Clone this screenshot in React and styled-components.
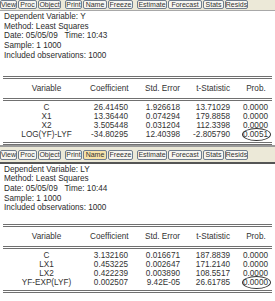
import React from 'react';
import styled, { createGlobalStyle } from 'styled-components';

const GlobalStyle = createGlobalStyle`
  html, body {
    margin: 0;
    padding: 0;
    background: #ffffff;
  }
  body {
    font-family: "Liberation Sans", Arial, sans-serif;
    color: #2a2a2a;
    width: 275px;
    overflow: hidden;
  }
`;

const Page = styled.div`
  width: 275px;
  display: flex;
  flex-direction: column;
`;

const Panel = styled.section`
  display: flex;
  flex-direction: column;
  border-top: ${(p) => (p.$first ? 'none' : '2px solid #9a9a9a')};
`;

const Toolbar = styled.div`
  display: flex;
  align-items: flex-start;
  box-sizing: border-box;
  height: ${(p) => (p.$first ? 11 : 17)}px;
  padding-top: ${(p) => (p.$first ? 0 : 3)}px;
  background: #ece9d8;
  border-bottom: ${(p) => (p.$first ? '1px solid #a8a8a8' : '2px solid #555')};
`;

const ButtonGroup = styled.div`
  display: flex;
  margin-right: ${(p) => p.$gap || 0}px;
`;

const ToolButton = styled.span`
  display: flex;
  align-items: center;
  justify-content: center;
  height: ${(p) => (p.$tall ? 10 : 9)}px;
  box-sizing: border-box;
  width: ${(p) => p.$w}px;
  margin-right: 1px;
  border: 1px solid #6f7d8e;
  border-radius: 2px;
  background: ${(p) => (p.$hot ? '#f7e2a8' : '#f7f6f1')};
  font-size: 7px;
  line-height: 7px;
  color: #333;
  white-space: nowrap;
`;

const Info = styled.div`
  padding: 1px 0 0 4px;
  font-size: 8.2px;
  line-height: 9.7px;
  color: #2c2c2c;
`;

const Table = styled.div`
  margin: ${(p) => p.$top}px 3px 0 3px;
  border-top: 3px double #707070;
  border-bottom: 3px double #707070;
  padding-bottom: 3px;
`;

const HeadRow = styled.div`
  display: grid;
  grid-template-columns: 87px 38px 52px 50px 38px 1fr;
  align-items: center;
  height: 19px;
  border-bottom: 3px double #707070;
  margin-bottom: 2px;
  font-size: 8.2px;
  color: #333;
`;

const Row = styled.div`
  display: grid;
  grid-template-columns: 87px 38px 52px 50px 38px 1fr;
  align-items: center;
  height: 9px;
  font-size: 8.2px;
  color: #333;
`;

const NameCell = styled.span`
  text-align: center;
  white-space: nowrap;
`;

const NumCell = styled.span`
  text-align: right;
  white-space: nowrap;
  position: relative;
`;

const Circled = styled.span`
  position: absolute;
  right: -3px;
  top: -2px;
  width: 27px;
  height: 11px;
  border: 1px solid #333;
  border-radius: 50%;
`;

const buttons = [
  [
    ['View', 17],
    ['Proc', 19],
    ['Object', 23],
  ],
  [
    ['Print', 17],
    ['Name', 24],
    ['Freeze', 25],
  ],
  [
    ['Estimate', 30],
    ['Forecast', 34],
    ['Stats', 21],
    ['Resids', 23],
  ],
];

const models = [
  {
    dep: 'Y',
    time: '10:43',
    rows: [
      ['C', '26.41450', '1.926618', '13.71029', '0.0000'],
      ['X1', '13.36440', '0.074294', '179.8858', '0.0000'],
      ['X2', '3.505448', '0.031204', '112.3398', '0.0000'],
      ['LOG(YF)-LYF', '-34.80295', '12.40398', '-2.805790', '0.0051'],
    ],
  },
  {
    dep: 'LY',
    time: '10:44',
    rows: [
      ['C', '3.132160', '0.016671', '187.8839', '0.0000'],
      ['LX1', '0.453225', '0.002647', '171.2140', '0.0000'],
      ['LX2', '0.422239', '0.003890', '108.5517', '0.0000'],
      ['YF-EXP(LYF)', '0.002507', '9.42E-05', '26.61785', '0.0000'],
    ],
  },
];

function EquationView({ model, first }) {
  return (
    <Panel $first={first}>
      <Toolbar $first={first}>
        {buttons.map((group, gi) => (
          <ButtonGroup key={gi} $gap={gi < 2 ? 3 : 0}>
            {group.map(([label, w]) => (
              <ToolButton key={label} $w={w} $tall={!first} $hot={!first && label === 'Name'}>
                {label}
              </ToolButton>
            ))}
          </ButtonGroup>
        ))}
      </Toolbar>
      <Info>
        <div>Dependent Variable: {model.dep}</div>
        <div>Method: Least Squares</div>
        <div>Date: 05/05/09&nbsp;&nbsp; Time: {model.time}</div>
        <div>Sample: 1 1000</div>
        <div>Included observations: 1000</div>
      </Info>
      <Table $top={first ? 15 : 11}>
        <HeadRow>
          <NameCell>Variable</NameCell>
          <NumCell>Coefficient</NumCell>
          <NumCell>Std. Error</NumCell>
          <NumCell>t-Statistic</NumCell>
          <NumCell>Prob.&nbsp;</NumCell>
        </HeadRow>
        {model.rows.map((r, i) => (
          <Row key={r[0]}>
            <NameCell>{r[0]}</NameCell>
            <NumCell>{r[1]}</NumCell>
            <NumCell>{r[2]}</NumCell>
            <NumCell>{r[3]}</NumCell>
            <NumCell>
              {r[4]}
              {/* the last p-value is ringed in the screenshot */}
              {i === model.rows.length - 1 && <Circled />}
            </NumCell>
          </Row>
        ))}
      </Table>
    </Panel>
  );
}

export default function App() {
  return (
    <Page>
      <GlobalStyle />
      {models.map((m, i) => (
        <EquationView key={m.dep} model={m} first={i === 0} />
      ))}
    </Page>
  );
}
